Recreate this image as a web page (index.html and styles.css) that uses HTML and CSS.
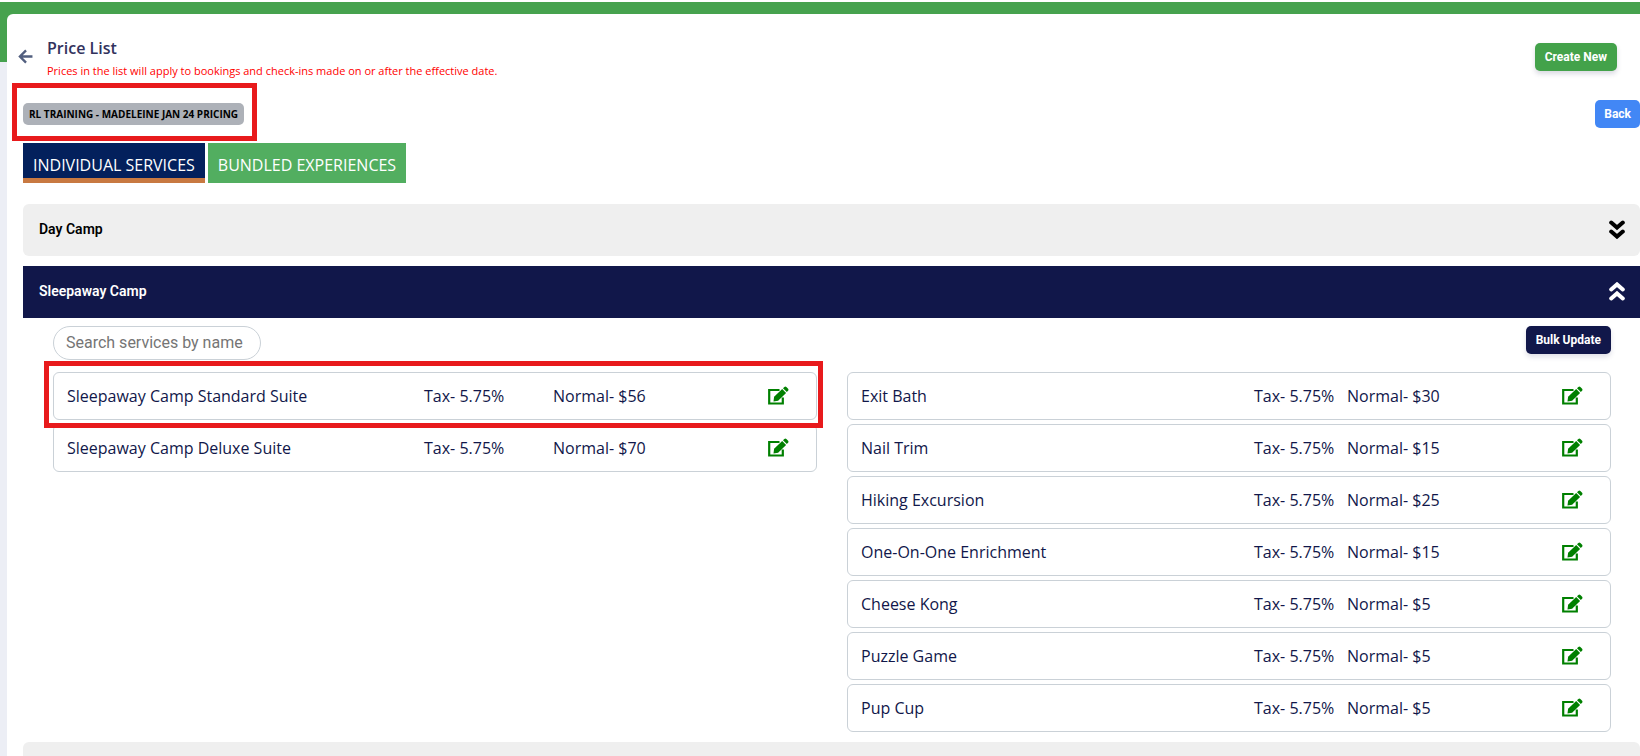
FILE: index.html
```html
<!DOCTYPE html>
<html lang="en">
<head>
<meta charset="utf-8">
<title>Price List</title>
<link rel="stylesheet" href="styles.css">
</head>
<body>
<svg class="sprite" aria-hidden="true">
  <symbol id="edit" viewBox="0 0 21 19">
    <path d="M11.500 4H1.200v13.500h13.600V11.500" fill="none" stroke="currentColor" stroke-width="2.200"/>
    <path d="M5.500 15.600l.6-4.800 8.100-7.700 3.900 3.800-8 7.900z" fill="currentColor"/>
    <path d="M15 2.300l1.400-1.300q1-.9 2 0l1.700 1.700q.9 1 0 2l-1.300 1.400z" fill="currentColor"/>
  </symbol>
  <symbol id="chevrons" viewBox="0 0 16 19">
    <path d="M2.200 2.600L8 7.600l5.800-5M2.200 11.600L8 16.600l5.800-5" fill="none" stroke="currentColor" stroke-width="4" stroke-linecap="round"/>
  </symbol>
</svg>
<div class="page">
  <main class="card">
    <header class="header">
      <a class="back-link" href="#" aria-label="Go back">
        <svg viewBox="0 0 14 14"><path d="M13.500 7H2M7.500 1.300L1.800 7l5.700 5.700" fill="none" stroke="currentColor" stroke-width="2.200"/></svg>
      </a>
      <div class="heading">
        <h1 class="title">Price List</h1>
        <p class="notice">Prices in the list will apply to bookings and check-ins made on or after the effective date.</p>
      </div>
      <button class="btn btn-green" type="button">Create New</button>
    </header>
    <div class="content">
      <div class="toolbar">
        <div class="marked"><span class="badge">RL TRAINING - MADELEINE JAN 24 PRICING</span><span class="marker marker-badge"></span></div>
        <button class="btn btn-blue" type="button">Back</button>
      </div>
      <nav class="tabs">
        <button class="tab tab-active" type="button">INDIVIDUAL SERVICES</button>
        <button class="tab" type="button">BUNDLED EXPERIENCES</button>
      </nav>
      <button class="section" type="button" aria-expanded="false">Day Camp<svg class="chevrons"><use href="#chevrons"/></svg></button>
      <button class="section section-open" type="button" aria-expanded="true">Sleepaway Camp<svg class="chevrons"><use href="#chevrons"/></svg></button>
      <div class="panel">
        <div class="panel-tools">
          <input class="search" type="text" placeholder="Search services by name" aria-label="Search services by name">
          <button class="btn btn-navy" type="button">Bulk Update</button>
        </div>
        <div class="columns">
          <ul class="services">
            <li class="service marked"><span>Sleepaway Camp Standard Suite</span><span>Tax- 5.75%</span><span>Normal- $56</span><button class="edit" type="button" aria-label="Edit"><svg><use href="#edit"/></svg></button><span class="marker marker-service"></span></li>
            <li class="service"><span>Sleepaway Camp Deluxe Suite</span><span>Tax- 5.75%</span><span>Normal- $70</span><button class="edit" type="button" aria-label="Edit"><svg><use href="#edit"/></svg></button></li>
          </ul>
          <ul class="services extras">
            <li class="service"><span>Exit Bath</span><span>Tax- 5.75%</span><span>Normal- $30</span><button class="edit" type="button" aria-label="Edit"><svg><use href="#edit"/></svg></button></li>
            <li class="service"><span>Nail Trim</span><span>Tax- 5.75%</span><span>Normal- $15</span><button class="edit" type="button" aria-label="Edit"><svg><use href="#edit"/></svg></button></li>
            <li class="service"><span>Hiking Excursion</span><span>Tax- 5.75%</span><span>Normal- $25</span><button class="edit" type="button" aria-label="Edit"><svg><use href="#edit"/></svg></button></li>
            <li class="service"><span>One-On-One Enrichment</span><span>Tax- 5.75%</span><span>Normal- $15</span><button class="edit" type="button" aria-label="Edit"><svg><use href="#edit"/></svg></button></li>
            <li class="service"><span>Cheese Kong</span><span>Tax- 5.75%</span><span>Normal- $5</span><button class="edit" type="button" aria-label="Edit"><svg><use href="#edit"/></svg></button></li>
            <li class="service"><span>Puzzle Game</span><span>Tax- 5.75%</span><span>Normal- $5</span><button class="edit" type="button" aria-label="Edit"><svg><use href="#edit"/></svg></button></li>
            <li class="service"><span>Pup Cup</span><span>Tax- 5.75%</span><span>Normal- $5</span><button class="edit" type="button" aria-label="Edit"><svg><use href="#edit"/></svg></button></li>
          </ul>
        </div>
      </div>
      <div class="section"></div>
    </div>
  </main>
</div>
</body>
</html>
```
FILE: styles.css
```css
* { box-sizing: border-box; }

body {
  margin: 0;
  background: #fff;
  font-family: "Open Sans", sans-serif;
  font-size: 16px;
  color: #11174a;
}

button { border: 0; cursor: pointer; }

.sprite { display: none; }

.page {
  height: 100vh;
  overflow: hidden;
  border-top: 2px solid #fff;
  padding: 12px 0 0 7px;
  background: linear-gradient(#46a24e 60px, #eceef5 60px);
}

.card {
  min-height: 100%;
  background: #fff;
  border-radius: 6px 0 0 0;
  padding-top: 22px;
}

.header {
  display: flex;
  align-items: flex-start;
  padding: 0 23px 0 11px;
}

.back-link {
  width: 15px;
  height: 15px;
  margin: 13px 14px 0 0;
  color: #525f7f;
}

.back-link svg { display: block; width: 15px; height: 15px; }

.heading { flex: 1; }

.title {
  margin: 0;
  font-size: 16px;
  line-height: 24px;
  font-weight: 600;
  color: #32325d;
}

.notice {
  margin: 0;
  font-size: 11px;
  line-height: 22px;
  color: #f00;
}

.btn {
  height: 28px;
  padding: 0 10px;
  border-radius: 5px;
  color: #fff;
  font-family: Roboto, sans-serif;
  font-size: 12px;
  font-weight: 700;
  white-space: nowrap;
}

.btn-green { margin-top: 7px; background: #43a24a; box-shadow: 0 3px 5px rgba(50, 50, 93, .18); }
.btn-blue { padding: 0 9px; background: #4287f5; }
.btn-navy { background: #11174a; box-shadow: 0 3px 5px rgba(50, 50, 93, .15); }

.content { padding-left: 16px; }

.toolbar {
  display: flex;
  align-items: center;
  justify-content: space-between;
  margin: 18px 0 15px;
}

.marked { position: relative; }

.badge {
  display: block;
  padding: 0 6px;
  border-radius: 5px;
  background: #adb1b8;
  color: #000;
  font-size: 10px;
  line-height: 22px;
  font-weight: 700;
}

.marker {
  position: absolute;
  border: 5px solid #e81a1c;
  pointer-events: none;
}

.marker-badge { inset: -20px -13px -16px -11px; }
.marker-service { inset: -12px -7px -9px -10px; z-index: 1; }

.tabs { display: flex; gap: 3px; margin-bottom: 21px; }

.tab {
  height: 40px;
  padding: 4px 10px 0;
  background: #52ae60;
  color: #fff;
  font-family: inherit;
  font-size: 16px;
}

.tab-active {
  background: #03205c;
  border-bottom: 5px solid #c87941;
  padding-top: 9px;
}

.section {
  display: flex;
  align-items: center;
  justify-content: space-between;
  width: 100%;
  height: 52px;
  margin-bottom: 10px;
  padding: 0 15px 3px 16px;
  border-radius: 6px;
  background: #efefef;
  color: #000;
  font-family: Roboto, sans-serif;
  font-size: 14px;
  font-weight: 600;
}

.section-open { margin-bottom: 0; border-radius: 0; background: #11174a; color: #fff; }

.chevrons { width: 16px; height: 19px; margin-top: 2px; }
.section-open .chevrons { transform: rotate(180deg); }

.panel { padding: 8px 29px 10px 30px; }

.panel-tools {
  display: flex;
  align-items: flex-start;
  justify-content: space-between;
  margin-bottom: 12px;
}

.search {
  width: 208px;
  height: 34px;
  padding: 0 12px 2px;
  border: 1px solid #cad1d7;
  border-radius: 17px;
  background: #fff;
  font-family: Roboto, sans-serif;
  font-size: 16px;
}

.search::placeholder { color: #757575; }

.columns {
  display: grid;
  grid-template-columns: 1fr 1fr;
  gap: 30px;
}

.services {
  display: flex;
  flex-direction: column;
  gap: 4px;
  margin: 0;
  padding: 0;
  list-style: none;
}

.service {
  display: grid;
  grid-template-columns: 357fr 129fr 215fr 35fr;
  align-items: center;
  height: 48px;
  padding: 0 13px;
  border: 1px solid #cad1d7;
  border-radius: 6px;
  white-space: nowrap;
}

.extras .service { grid-template-columns: 393fr 93fr 215fr 35fr; }

.edit { width: 21px; height: 21px; padding: 0 0 2px; background: none; color: #008000; }
.edit svg { display: block; width: 21px; height: 19px; }
```
